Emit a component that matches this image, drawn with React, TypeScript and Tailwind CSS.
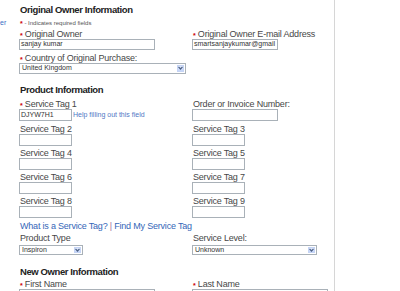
import type { ReactNode } from "react"

function Req() {
  return <span className="text-[#cc0000] text-[7px] font-bold align-[-1px]">*</span>
}

function Label({ text, req }: { text: string; req?: boolean }) {
  return (
    <div className="h-[10px] leading-[10px] text-[9px] tracking-[-0.2px] text-[#474747] whitespace-nowrap pl-px">
      {req && (
        <>
          <Req />{" "}
        </>
      )}
      {text}
    </div>
  )
}

function Input({ className, value }: { className: string; value?: string }) {
  return (
    <div
      className={`border border-[#a9b1b8] bg-white text-[7px] text-[#333] px-px flex items-center whitespace-nowrap overflow-hidden ${className}`}
    >
      {value}
    </div>
  )
}

function Select({ className, value }: { className: string; value: string }) {
  return (
    <div
      className={`border border-[#a9b1b8] bg-white flex items-stretch p-px ${className}`}
    >
      <div className="flex-1 flex items-center pl-px text-[7px] text-[#333] whitespace-nowrap overflow-hidden">
        {value}
      </div>
      <div className="w-[7px] bg-gradient-to-b from-[#e3ebfd] to-[#c3d4f8] border border-[#c5d4f5] flex items-center justify-center">
        <svg width="5" height="4" viewBox="0 0 5 4">
          <path d="M0.5 0.8 L2.5 3 L4.5 0.8" fill="none" stroke="#4d6185" strokeWidth="1.2" />
        </svg>
      </div>
    </div>
  )
}

function Row({ left, right, className }: { left: ReactNode; right?: ReactNode; className: string }) {
  return (
    <div className={`flex ${className}`}>
      <div className="w-[173px] shrink-0">{left}</div>
      <div className="flex-1">{right}</div>
    </div>
  )
}

function Title({ children, className }: { children: ReactNode; className: string }) {
  return (
    <div className={`h-[12px] leading-[12px] text-[9.5px] font-bold tracking-[-0.4px] text-[#222] pl-px whitespace-nowrap ${className}`}>
      {children}
    </div>
  )
}

export default function App() {
  const tags = [
    ["Service Tag 2", "Service Tag 3"],
    ["Service Tag 4", "Service Tag 5"],
    ["Service Tag 6", "Service Tag 7"],
    ["Service Tag 8", "Service Tag 9"],
  ]

  return (
    <div className="w-[400px] h-[291px] overflow-hidden bg-white flex font-['Liberation_Sans',Arial,sans-serif]">
      {/* sidebar edge */}
      <div className="w-[19px] shrink-0 pt-[18.6px] text-[7px] leading-[8px] text-[#3a6fc4] overflow-hidden">
        er
      </div>

      {/* form */}
      <div className="w-[315px] shrink-0 flex flex-col pt-[3.5px]">
        <Title className="">Original Owner Information</Title>
        <div className="mt-[3.7px] h-[8px] leading-[8px] text-[6px] text-[#555] pl-px whitespace-nowrap">
          <Req /> - Indicates required fields
        </div>

        <Row
          className="mt-[1.9px]"
          left={
            <>
              <Label text="Original Owner" req />
              <Input className="w-[136px] h-[11px]" value="sanjay kumar" />
            </>
          }
          right={
            <>
              <Label text="Original Owner E-mail Address" req />
              <Input className="w-[86px] h-[11px]" value="smartsanjaykumar@gmail" />
            </>
          }
        />

        <div className="mt-[2.7px]">
          <Label text="Country of Original Purchase:" req />
          <Select className="w-[167px] h-[11px]" value="United Kingdom" />
        </div>

        <Title className="mt-[10.2px]">Product Information</Title>

        <Row
          className="mt-[3.3px]"
          left={
            <>
              <Label text="Service Tag 1" req />
              <div className="flex items-center">
                <Input className="w-[53px] h-[12px]" value="DJYW7H1" />
                <span className="ml-px text-[7px] text-[#4f78c4] whitespace-nowrap">
                  Help filling out this field
                </span>
              </div>
            </>
          }
          right={
            <>
              <Label text="Order or Invoice Number:" />
              <Input className="w-[86px] h-[12px]" />
            </>
          }
        />

        {tags.map(([a, b]) => (
          <Row
            key={a}
            className="mt-[2.3px]"
            left={
              <>
                <Label text={a} />
                <Input className="w-[53px] h-[12px]" />
              </>
            }
            right={
              <>
                <Label text={b} />
                <Input className="w-[53px] h-[12px]" />
              </>
            }
          />
        ))}

        <div className="mt-[2.1px] h-[10px] leading-[10px] text-[9px] tracking-[-0.2px] text-[#3466b8] pl-px whitespace-nowrap">
          What is a Service Tag? <span className="text-[#9a6f9e]">|</span> Find My Service Tag
        </div>

        <Row
          className="mt-[2.7px]"
          left={
            <>
              <Label text="Product Type" />
              <Select className="mt-[1.7px] w-[64px] h-[10px]" value="Inspiron" />
            </>
          }
          right={
            <>
              <Label text="Service Level:" />
              <Select className="mt-[1.7px] w-[125px] h-[10px]" value="Unknown" />
            </>
          }
        />

        <Title className="mt-[10.8px]">New Owner Information</Title>

        <Row
          className="mt-[1.2px]"
          left={
            <>
              <Label text="First Name" req />
              <Input className="w-[136px] h-[12px]" />
            </>
          }
          right={
            <>
              <Label text="Last Name" req />
              <Input className="w-[136px] h-[12px]" />
            </>
          }
        />
      </div>

      {/* divider */}
      <div className="w-px shrink-0 bg-[#d6d6d6]" />
      <div className="flex-1" />
    </div>
  )
}
